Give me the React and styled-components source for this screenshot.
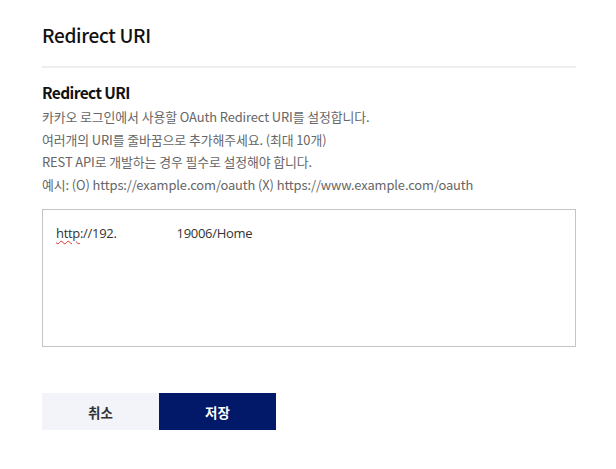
import React from 'react';
import styled, { createGlobalStyle } from 'styled-components';

const GlobalStyle = createGlobalStyle`
  html, body {
    margin: 0;
    padding: 0;
    background: #fff;
  }
  body {
    font-family: "Noto Sans CJK KR", "Noto Sans", sans-serif;
  }
`;

const Page = styled.div`
  width: 534px;
  padding: 21px 0 0 42px;
`;

const Title = styled.h1`
  margin: 0;
  font-size: 19px;
  line-height: 28px;
  font-weight: 500;
  color: #111;
  letter-spacing: -0.3px;
`;

const Divider = styled.hr`
  margin: 17px 0 0;
  border: 0;
  height: 2px;
  background: #eeeeee;
`;

const Section = styled.section`
  margin-top: 12px;
`;

const SubTitle = styled.h2`
  margin: 0;
  font-size: 15.5px;
  line-height: 24px;
  font-weight: 700;
  color: #111;
  letter-spacing: -0.6px;
`;

const Desc = styled.p`
  margin: 2px 0 0;
  font-size: 12.9px;
  line-height: 22.5px;
  color: #666;
  letter-spacing: -0.1px;
`;

const Field = styled.div`
  margin-top: 13px;
  border: 1px solid #c4c4c4;
  padding: 13px 13px;
  box-sizing: border-box;
  height: 138px;
  font-family: "Open Sans", "Noto Sans", sans-serif;
  font-size: 13px;
  line-height: 20px;
  letter-spacing: -0.3px;
  color: #333;
`;

const Spell = styled.span`
  text-decoration: underline wavy #e03030;
  text-decoration-thickness: 1px;
  text-underline-offset: 2px;
`;

const Masked = styled.span`
  display: inline-block;
  width: ${p => p.$w}px;
`;

const Buttons = styled.div`
  display: flex;
  margin-top: 46px;
`;

const Button = styled.button`
  width: 117px;
  height: 37px;
  border: 0;
  margin: 0;
  padding: 0;
  font-family: "Noto Sans CJK KR", sans-serif;
  font-size: 13.5px;
  font-weight: 700;
  background: ${p => (p.$primary ? '#021868' : '#f3f4f9')};
  color: ${p => (p.$primary ? '#fff' : '#333')};
  cursor: pointer;
`;

const App = () => (
  <>
    <GlobalStyle />
    <Page>
      <Title>Redirect URI</Title>
      <Divider />
      <Section>
        <SubTitle>Redirect URI</SubTitle>
        <Desc>
          카카오 로그인에서 사용할 OAuth Redirect URI를 설정합니다.<br />
          여러개의 URI를 줄바꿈으로 추가해주세요. (최대 10개)<br />
          REST API로 개발하는 경우 필수로 설정해야 합니다.<br />
          예시: (O) https://example.com/oauth (X) https://www.example.com/oauth
        </Desc>
        <Field>
          <Spell>http</Spell>://192.<Masked $w={60} />19006/Home
        </Field>
      </Section>
      <Buttons>
        <Button>취소</Button>
        <Button $primary>저장</Button>
      </Buttons>
    </Page>
  </>
);

export default App;
